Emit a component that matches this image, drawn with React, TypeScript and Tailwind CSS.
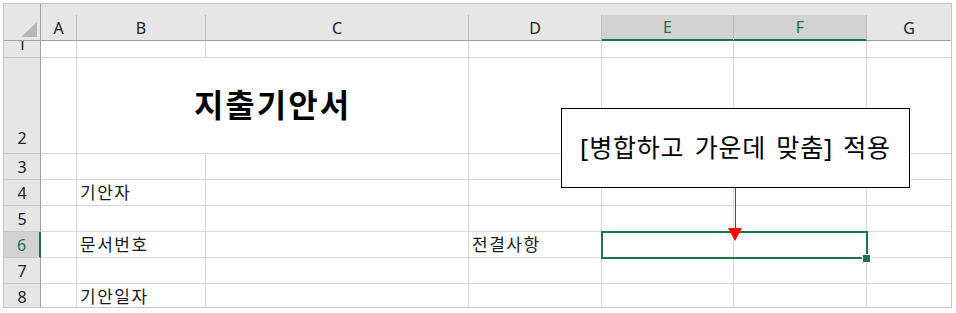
import React from 'react';

const FONT = "font-['Noto_Sans','Noto_Sans_CJK_KR',sans-serif]";

const COLS = ['A', 'B', 'C', 'D', 'E', 'F', 'G'];
const SELECTED_COLS = ['E', 'F'];

// content by row number -> column letter
const CELLS: Record<number, Record<string, string>> = {
    4: { B: '기안자' },
    6: { B: '문서번호', D: '전결사항' },
    8: { B: '기안일자' },
};

function ColHeader({ label }: { label: string }) {
    const selected = SELECTED_COLS.includes(label);
    return (
        <div className="flex flex-col justify-end bg-[#e6e6e6]">
            <div
                className={
                    selected
                        ? 'h-[26px] flex items-center justify-center bg-[#d2d2d2] text-[#217346] border-r border-r-[#bdbdbd] border-b-2 border-b-[#217346] text-[16px]'
                        : label === 'G'
                          ? 'h-[26px] flex items-center justify-center text-[#222] border-b border-b-[#9f9f9f] text-[16px]'
                          : 'h-[26px] flex items-center justify-center text-[#222] border-r border-r-[#bdbdbd] border-b border-b-[#9f9f9f] text-[16px]'
                }
            >
                {label}
            </div>
        </div>
    );
}

function RowHeader({ n, selected }: { n: number; selected?: boolean }) {
    if (n === 1) {
        // row 1 is scrolled partly out of view
        return (
            <div className="overflow-hidden bg-[#e6e6e6] border-r border-r-[#9f9f9f] border-b border-b-[#c8c8c8]">
                <div className="h-[26px] mt-[-10px] flex items-center justify-center text-[16px] text-[#222]">1</div>
            </div>
        );
    }
    if (n === 2) {
        return (
            <div className="flex items-end justify-center pb-[3px] bg-[#e6e6e6] border-r border-r-[#9f9f9f] border-b border-b-[#c8c8c8] text-[16px] text-[#222]">
                2
            </div>
        );
    }
    return (
        <div
            className={
                selected
                    ? 'flex items-center justify-center bg-[#d2d2d2] text-[#217346] border-r-2 border-r-[#217346] border-b border-b-[#c8c8c8] text-[16px]'
                    : 'flex items-center justify-center bg-[#e6e6e6] text-[#222] border-r border-r-[#9f9f9f] border-b border-b-[#c8c8c8] text-[16px]'
            }
        >
            {n}
        </div>
    );
}

function Cell({ text, last }: { text?: string; last?: boolean }) {
    return (
        <div
            className={
                last
                    ? 'flex items-center border-b border-[#d9d9d9] pl-[3px] text-[17px] tracking-[1.5px] text-[#1a1a1a]'
                    : 'flex items-center border-r border-b border-[#d9d9d9] pl-[3px] text-[17px] tracking-[1.5px] text-[#1a1a1a]'
            }
        >
            {text}
        </div>
    );
}

export default function App() {
    const rows = [1, 2, 3, 4, 5, 6, 7, 8];

    return (
        <div className={`w-[956px] h-[313px] bg-white pt-[3px] pl-[3px] ${FONT}`}>
            <div className="relative w-[949px] h-[305px] border border-[#c6c6c6] overflow-hidden">
                <div className="grid grid-cols-[37px_36px_129px_263px_133px_132px_133px_84px] grid-rows-[37px_17px_96px_26px_26px_26px_26px_26px_26px]">
                    {/* Corner */}
                    <div className="relative bg-[#e6e6e6] border-r border-r-[#9f9f9f] border-b border-b-[#9f9f9f]">
                        <svg width="37" height="37" className="absolute left-0 top-0">
                            <polygon points="33,18 33,33 17,33" fill="#b7b7b7" />
                        </svg>
                    </div>
                    {COLS.map((c) => (
                        <ColHeader key={c} label={c} />
                    ))}

                    {rows.map((n) => {
                        if (n === 2) {
                            return (
                                <React.Fragment key={n}>
                                    <RowHeader n={n} />
                                    <Cell />
                                    <div className="col-span-2 flex items-center justify-center border-r border-b border-[#d9d9d9] pb-[2px] text-[32px] font-bold tracking-[2px] text-black">
                                        지출기안서
                                    </div>
                                    <Cell />
                                    <Cell />
                                    <Cell />
                                    <Cell last />
                                </React.Fragment>
                            );
                        }
                        const data = CELLS[n] || {};
                        return (
                            <React.Fragment key={n}>
                                <RowHeader n={n} selected={n === 6} />
                                {COLS.map((c) => (
                                    <Cell key={c} text={data[c]} last={c === 'G'} />
                                ))}
                            </React.Fragment>
                        );
                    })}
                </div>

                {/* Selection E6:F6 */}
                <div className="absolute left-[597px] top-[227px] w-[267px] h-[28px] border-2 border-[#217346]" />
                <div className="absolute left-[858px] top-[250px] w-[9px] h-[9px] bg-[#217346] border border-white" />

                {/* Callout */}
                <div className="absolute left-[557px] top-[104px] w-[349px] h-[80px] bg-white border border-black flex items-center justify-center">
                    <span className="text-[25px] text-black tracking-[0.8px] [word-spacing:3px]">[병합하고 가운데 맞춤] 적용</span>
                </div>
                <div className="absolute left-[731px] top-[184px] w-px h-[42px] bg-[#ff0000]" />
                <svg width="14" height="14" className="absolute left-[724px] top-[224px]">
                    <polygon points="0,0 14,0 7,13" fill="#ff0000" />
                </svg>
            </div>
        </div>
    );
}
